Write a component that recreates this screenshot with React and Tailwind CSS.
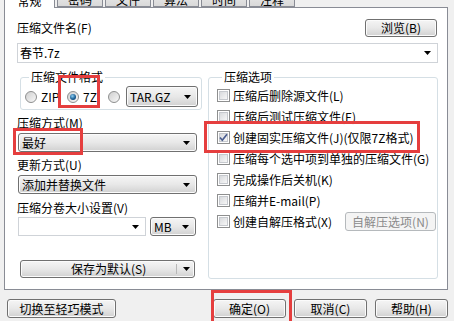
import React from "react"

function Arrow() {
  return (
    <svg width="7" height="4" viewBox="0 0 7 4" className="flex-none">
      <path d="M0 0H7L3.5 4Z" fill="#000" />
    </svg>
  )
}

function Btn({ children, className = "", disabled }) {
  return (
    <div
      className={`flex items-center justify-center rounded-[3px] border leading-[12px] ${
        disabled
          ? "border-[#b5b9bc] bg-[#f4f4f4] text-[#8a8a8a]"
          : "border-[#707070] bg-linear-to-b from-[#f5f5f5] via-[#e8e8e8] to-[#d1d1d1] shadow-[inset_0_0_0_1px_#fbfbfb]"
      } ${className}`}
    >
      {children}
    </div>
  )
}

function Select({ value, className = "" }) {
  return (
    <div
      className={`flex items-center rounded-[3px] border border-[#707070] bg-linear-to-b from-[#f5f5f5] via-[#e8e8e8] to-[#d1d1d1] shadow-[inset_0_0_0_1px_#fbfbfb] pl-[3px] pr-[6px] leading-[12px] ${className}`}
    >
      <span className="flex-1">{value}</span>
      <Arrow />
    </div>
  )
}

function Combo({ value, className = "" }) {
  return (
    <div className={`flex items-center border border-[#cfd3d8] bg-white pl-[2px] pr-[6px] leading-[12px] ${className}`}>
      <span className="flex-1">{value}</span>
      <Arrow />
    </div>
  )
}

function Check({ checked }) {
  return (
    <span className="relative flex h-[13px] w-[13px] flex-none items-center justify-center border border-[#8e8f8f] bg-white">
      <span className="h-[9px] w-[9px] border border-[#c6c9ce] bg-linear-to-br from-[#d8dadd] to-[#f7f7f7]" />
      {checked && (
        <svg width="11" height="11" viewBox="0 0 11 11" className="absolute left-[0px] top-[0px]">
          <path d="M2 5.5L4.3 8.2L9 2.2" stroke="#4a5d8f" strokeWidth="1.7" fill="none" />
        </svg>
      )}
    </span>
  )
}

function Radio({ checked }) {
  return (
    <span className="flex h-[12px] w-[12px] flex-none items-center justify-center rounded-full border border-[#8e8f8f] bg-linear-to-br from-[#cfcfcf] to-[#f8f8f8]">
      {checked && (
        <span className="h-[6px] w-[6px] rounded-full bg-[radial-gradient(circle_at_40%_35%,#8fd0f5,#1a5f94_55%,#0c3a66)]" />
      )}
    </span>
  )
}

function Row({ checked, label, children }) {
  return (
    <div className="flex h-[21px] items-center gap-[3px]">
      <Check checked={checked} />
      <span className="leading-[12px]">{label}</span>
      {children}
    </div>
  )
}

export default function App() {
  const tabs = ["密码", "文件", "算法", "时间", "注释"]
  return (
    <div className="relative h-[321px] w-[454px] overflow-hidden bg-[#f0f0f0] font-['Noto_Sans_CJK_SC',sans-serif] text-[12px] text-black">
      {/* tabs */}
      <div className="mt-[-13px] flex h-[20px] items-start pl-[4px]">
        <div className="relative z-10 flex h-[21px] w-[51px] items-center justify-center border border-b-0 border-[#898c95] bg-white pt-[6px] leading-[12px]">
          常规
        </div>
        {tabs.map((t) => (
          <div
            key={t}
            className="ml-[2px] flex h-[20px] w-[46px] items-center justify-center border border-[#898c95] bg-linear-to-b from-[#f2f2f2] to-[#d9d9d9] pt-[6px] leading-[12px]"
          >
            {t}
          </div>
        ))}
      </div>

      {/* panel */}
      <div className="ml-[4px] h-[283px] w-[444px] border border-[#898c95] bg-white pl-[12px] pr-[8px] pt-[11px]">
        <div className="flex h-[18px] items-center justify-between">
          <span className="leading-[12px]">压缩文件名(F)</span>
          <Btn className="mr-[2px] h-[18px] w-[72px]">浏览(B)</Btn>
        </div>
        <Combo value="春节.7z" className="mt-[6px] h-[20px] w-[421px]" />

        <div className="mt-[8px] grid grid-cols-[185px_230px] gap-[6px]">
          {/* left column */}
          <div className="flex flex-col">
            <fieldset className="ml-[3px] rounded-[3px] border border-[#d5dfe5] pb-[2px] pl-[4px] pt-[3px]">
              <legend className="ml-[4px] px-[2px] leading-[12px]">压缩文件格式</legend>
              <div className="flex h-[21px] items-center">
                <div className="flex w-[42px] items-center gap-[4px]">
                  <Radio />
                  <span className="leading-[12px]">ZIP</span>
                </div>
                <div className="flex w-[41px] items-center gap-[4px]">
                  <Radio checked />
                  <span className="leading-[12px]">7Z</span>
                </div>
                <Radio />
                <Select value="TAR.GZ" className="ml-[6px] h-[21px] w-[72px]" />
              </div>
            </fieldset>

            <span className="mt-[7px] leading-[12px]">压缩方式(M)</span>
            <Select value="最好" className="ml-[1px] mt-[4px] h-[19px] w-[179px]" />

            <span className="mt-[7px] leading-[12px]">更新方式(U)</span>
            <Select value="添加并替换文件" className="ml-[1px] mt-[4px] h-[19px] w-[179px]" />

            <span className="mt-[8px] leading-[12px]">压缩分卷大小设置(V)</span>
            <div className="ml-[1px] mt-[3px] flex gap-[4px]">
              <Combo value="" className="h-[19px] w-[128px]" />
              <Select value="MB" className="h-[19px] w-[46px]" />
            </div>

            <Btn className="ml-[3px] mt-[24px] h-[18px] w-[175px] !justify-start pl-[50px]">
              <span className="w-[105px]">保存为默认(S)</span>
              <span className="h-[10px] w-px bg-[#b8b8b8]" />
              <span className="ml-[6px]">
                <Arrow />
              </span>
            </Btn>
          </div>

          {/* right column */}
          <fieldset className="h-[208px] rounded-[3px] border border-[#d5dfe5] pl-[8px] pr-[1px] pt-[2px]">
            <legend className="ml-[5px] px-[2px] leading-[12px]">压缩选项</legend>
            <Row label="压缩后删除源文件(L)" />
            <Row label="压缩后测试压缩文件(E)" />
            <Row checked label="创建固实压缩文件(J)(仅限7Z格式)" />
            <Row label="压缩每个选中项到单独的压缩文件(G)" />
            <Row label="完成操作后关机(K)" />
            <Row label="压缩并E-mail(P)" />
            <Row label="创建自解压格式(X)">
              <Btn disabled className="ml-auto h-[19px] w-[91px]">
                自解压选项(N)
              </Btn>
            </Row>
          </fieldset>
        </div>
      </div>

      {/* bottom buttons */}
      <div className="mt-[9px] flex pl-[7px] pr-[6px]">
        <Btn className="h-[19px] w-[109px]">切换至轻巧模式</Btn>
        <div className="ml-auto flex gap-[8px]">
          <Btn className="h-[19px] w-[73px]">确定(O)</Btn>
          <Btn className="h-[19px] w-[73px]">取消(C)</Btn>
          <Btn className="h-[19px] w-[73px]">帮助(H)</Btn>
        </div>
      </div>

      {/* red annotation boxes */}
      <div className="absolute left-[58px] top-[75px] h-[33px] w-[42px] border-[3px] border-[#e53e3e]" />
      <div className="absolute left-[13px] top-[128px] h-[27px] w-[70px] border-[3px] border-[#e53e3e]" />
      <div className="absolute left-[204px] top-[121px] h-[32px] w-[216px] border-[3px] border-[#e53e3e]" />
      <div className="absolute left-[211px] top-[290px] h-[34px] w-[81px] border-[3px] border-[#e53e3e]" />
    </div>
  )
}
